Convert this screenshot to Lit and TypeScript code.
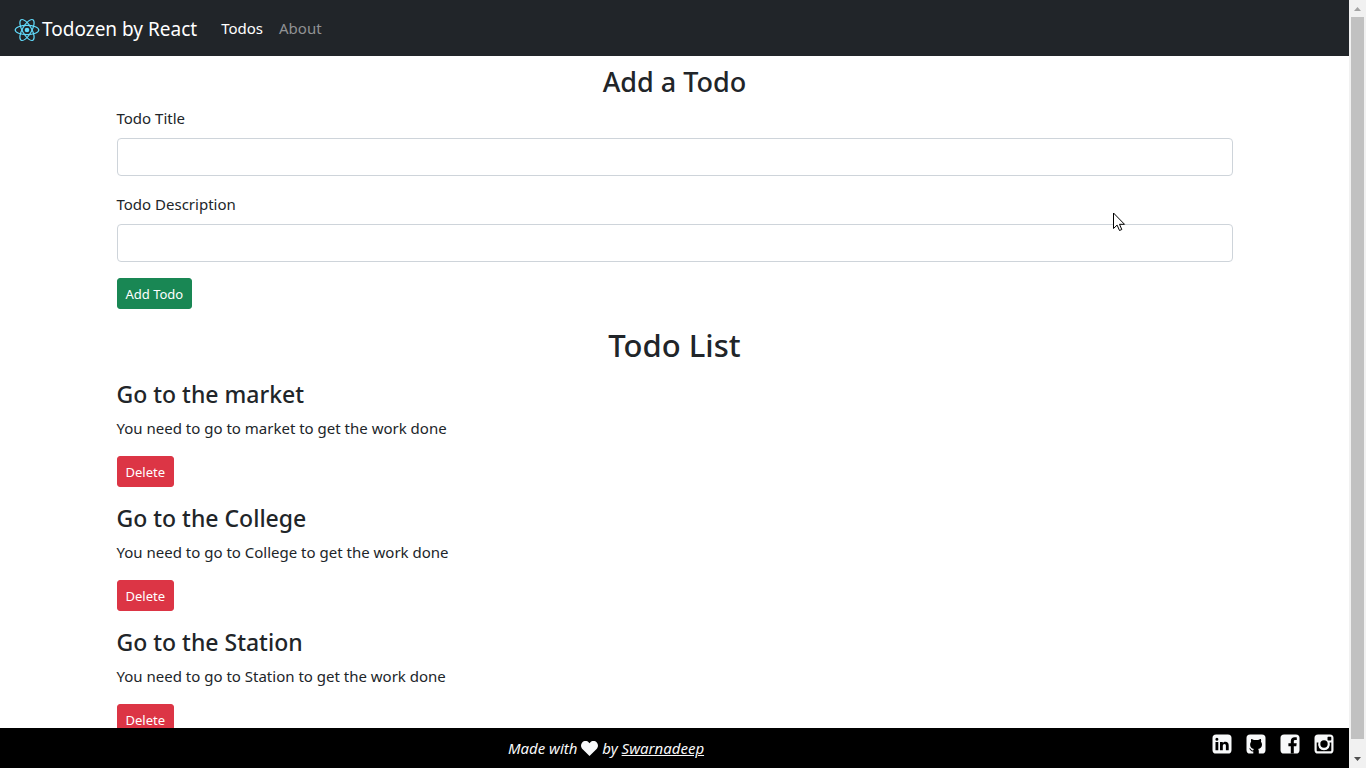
import { LitElement, html, css } from "lit";
import { customElement, state } from "lit/decorators.js";

interface Todo {
  id: number;
  title: string;
  desc: string;
}

@customElement("app-root")
export class AppRoot extends LitElement {
  static styles = css`
    :host {
      display: flex;
      height: 100vh;
      background: #fff;
      color: #212529;
      font-family: "Segoe UI", "Noto Sans", sans-serif;
      font-size: 15px;
      line-height: 24px;
    }
    *, *::before, *::after { box-sizing: border-box; }
    .page { flex: 1; min-width: 0; display: flex; flex-direction: column; position: relative; }
    nav { flex: none; display: flex; align-items: center; min-height: 56px; padding: 0 12px; background: #212529; gap: 16px; }
    a { color: inherit; text-decoration: none; }
    .brand { display: flex; align-items: center; color: #fff; font-size: 19px; line-height: 32px; margin-right: 8px; padding-top: 1px; }
    .brand svg { width: 30px; height: 24px; margin-top: 3px; }
    .link { color: #909294; }
    .link.active { color: #fff; }
    main { flex: 1; min-height: 0; overflow: hidden; }
    .container { width: 100%; max-width: 1140px; margin: 0 auto; padding: 8px 12px 0; }
    h2, h3, h4, p { margin: 0; }
    h2, h3, h4 { font-weight: 500; }
    h3 { font-size: 27px; line-height: 36px; text-align: center; margin-bottom: 6px; }
    h2 { font-size: 31px; line-height: 40px; text-align: center; margin: 16px 0 14px; }
    h4 { font-size: 23px; line-height: 31px; margin-bottom: 6px; }
    label { display: block; margin-bottom: 8px; }
    input { display: block; width: 100%; height: 38px; margin-bottom: 16px; padding: 6px 12px; border: 1px solid #ced4da; border-radius: 4px; background: #fff; color: inherit; font: inherit; outline: none; }
    button { display: block; height: 31px; padding: 5px 8px 3px; border: 1px solid; border-radius: 3px; color: #fff; font: inherit; font-size: 13px; line-height: 21px; }
    .add { background: #198754; border-color: #198754; }
    .delete { background: #dc3545; border-color: #dc3545; margin-bottom: 16px; }
    p { margin-bottom: 16px; }
    footer { flex: none; display: grid; grid-template-columns: 1fr auto; align-items: start; height: 40px; background: #000; color: #f8f9fa; padding: 6px 15px 0 0; }
    .credit { text-align: center; font-style: italic; line-height: 28px; margin: 0; }
    .credit a { text-decoration: underline; }
    .credit svg { width: 17px; height: 15px; vertical-align: -2px; }
    .social { display: flex; gap: 14px; }
    .social svg { display: block; width: 20px; height: 20px; }
    .scrollbar { flex: none; width: 17px; display: flex; flex-direction: column; align-items: center; background: #f1f1f1; }
    .scrollbar svg { flex: none; width: 17px; height: 17px; }
    .thumb { flex: none; width: 13px; height: 94%; background: #c1c1c1; }
    .fill { flex: 1; }
    .cursor { position: absolute; left: 1113px; top: 212px; width: 13px; height: 21px; }
  `;

  @state() private todos: Todo[] = [
    { id: 1, title: "Go to the market", desc: "You need to go to market to get the work done" },
    { id: 2, title: "Go to the College", desc: "You need to go to College to get the work done" },
    { id: 3, title: "Go to the Station", desc: "You need to go to Station to get the work done" },
  ];

  private remove(id: number) {
    this.todos = this.todos.filter((t) => t.id !== id);
  }

  private add(e: Event) {
    e.preventDefault();
    const form = e.target as HTMLFormElement;
    const data = new FormData(form);
    const title = String(data.get("title") ?? "");
    const desc = String(data.get("desc") ?? "");
    if (!title || !desc) return;
    this.todos = [...this.todos, { id: Date.now(), title, desc }];
    form.reset();
  }

  render() {
    return html`
      <div class="page">
        <nav>
          <a class="brand" href="#"><svg viewBox="-15 -12 30 24" fill="none" stroke="#61dafb" stroke-width="1.2" aria-hidden="true">
            <circle r="2.3" fill="#61dafb" stroke="none" />
            <ellipse rx="11.8" ry="4.6" />
            <ellipse rx="11.8" ry="4.6" transform="rotate(60)" />
            <ellipse rx="11.8" ry="4.6" transform="rotate(120)" />
          </svg>Todozen by React</a>
          <a class="link active" href="#">Todos</a>
          <a class="link" href="#about">About</a>
        </nav>
        <main>
          <div class="container">
            <h3>Add a Todo</h3>
            <form @submit=${this.add}>
              <label for="title">Todo Title</label>
              <input id="title" name="title" type="text" />
              <label for="desc">Todo Description</label>
              <input id="desc" name="desc" type="text" />
              <button class="add" type="submit">Add Todo</button>
            </form>
            <h2>Todo List</h2>
            ${this.todos.map((t) => html`
              <section>
                <h4>${t.title}</h4>
                <p>${t.desc}</p>
                <button class="delete" type="button" @click=${() => this.remove(t.id)}>Delete</button>
              </section>`)}
          </div>
        </main>
        <footer>
          <p class="credit">Made with <svg viewBox="0 0 17 15" fill="#f8f9fa" aria-label="love"><path d="M8.5 15 1.4 8C-.4 6.100-.4 3.200 1.200 1.500 3-.4 6.100-.4 7.800 1.400l.7.800.7-.8c1.700-1.800 4.800-1.800 6.600.1 1.600 1.700 1.600 4.600-.2 6.500z" /></svg> by <a href="#">Swarnadeep</a></p>
          <div class="social">
            <a href="#" aria-label="LinkedIn"><svg viewBox="0 0 20 20"><rect x=".5" y=".5" width="19" height="19" rx="3.600" fill="#f8f9fa" /><path d="M3.500 8h2.800v8.300H3.500zM4.900 3.800a1.500 1.500 0 1 1 0 3 1.500 1.500 0 0 1 0-3zM8 8h2.800v1.200C11.400 8.300 12.300 7.800 13.500 7.800c2 0 3.200 1.300 3.200 3.700v4.800h-2.800v-4.500c0-1.100-.5-1.800-1.400-1.800-1.100 0-1.700.8-1.700 1.900v4.400H8z" fill="#000" /></svg></a>
            <a href="#" aria-label="GitHub"><svg viewBox="0 0 20 20"><rect x=".5" y=".5" width="19" height="19" rx="3.600" fill="#f8f9fa" /><path d="M7.300 20v-2.600c-2.200.4-2.700-.9-3.300-1.800-.4-.6-1-.7-.9-1 .9-.4 1.700.3 2.200 1.100.5.8 1.200.8 2 .5.100-.5.3-.9.600-1.200-2.500-.4-3.800-2-3.800-4.500 0-1.100.4-2 1-2.700-.3-.9-.2-2 .1-2.900 1.100 0 2 .6 2.800 1.200 1.300-.3 2.800-.3 4.100 0 .8-.6 1.700-1.200 2.800-1.200.3.900.4 2 .1 2.900.6.700 1 1.600 1 2.700 0 2.600-1.400 4.200-3.900 4.500.5.400.7 1 .7 1.900V20z" fill="#000" /></svg></a>
            <a href="#" aria-label="Facebook"><svg viewBox="0 0 20 20"><rect x=".5" y=".5" width="19" height="19" rx="3.600" fill="#f8f9fa" /><path d="M10.800 19.500v-7.300H8.400V9.300h2.400V7.200c0-2.500 1.500-3.900 3.800-3.900 1 0 1.900.1 2.200.1v2.600h-1.500c-1.200 0-1.500.6-1.500 1.400v1.900h2.900l-.4 2.900h-2.500v7.300z" fill="#000" /></svg></a>
            <a href="#" aria-label="Instagram"><svg viewBox="0 0 20 20"><rect x=".5" y=".5" width="19" height="19" rx="3.600" fill="#f8f9fa" /><path d="M2.700 8.600h1.700a5.900 5.900 0 1 0 11.200 0h1.700v8c0 .4-.3.700-.7.700H3.400a.7.700 0 0 1-.7-.7zM14.200 2.700h2.400c.4 0 .7.300.7.700v2.300c0 .4-.3.700-.7.700h-2.400a.7.700 0 0 1-.7-.7V3.400c0-.4.3-.7.700-.7z" fill="#000" /><circle cx="10" cy="10" r="3.700" fill="#000" /></svg></a>
          </div>
        </footer>
        <svg class="cursor" viewBox="0 0 13 21" aria-hidden="true"><path d="M.5 1v15.500l3.600-3.400 2.400 5.400 2.300-1-2.300-5.200h5z" fill="#fff" stroke="#000" /></svg>
      </div>
      <div class="scrollbar" aria-hidden="true">
        <svg viewBox="0 0 17 17"><path d="M5 11h7L8.500 7z" fill="#a3a3a3" /></svg>
        <div class="thumb"></div>
        <div class="fill"></div>
        <svg viewBox="0 0 17 17"><path d="M5 6h7l-3.500 4z" fill="#505050" /></svg>
      </div>
    `;
  }
}
